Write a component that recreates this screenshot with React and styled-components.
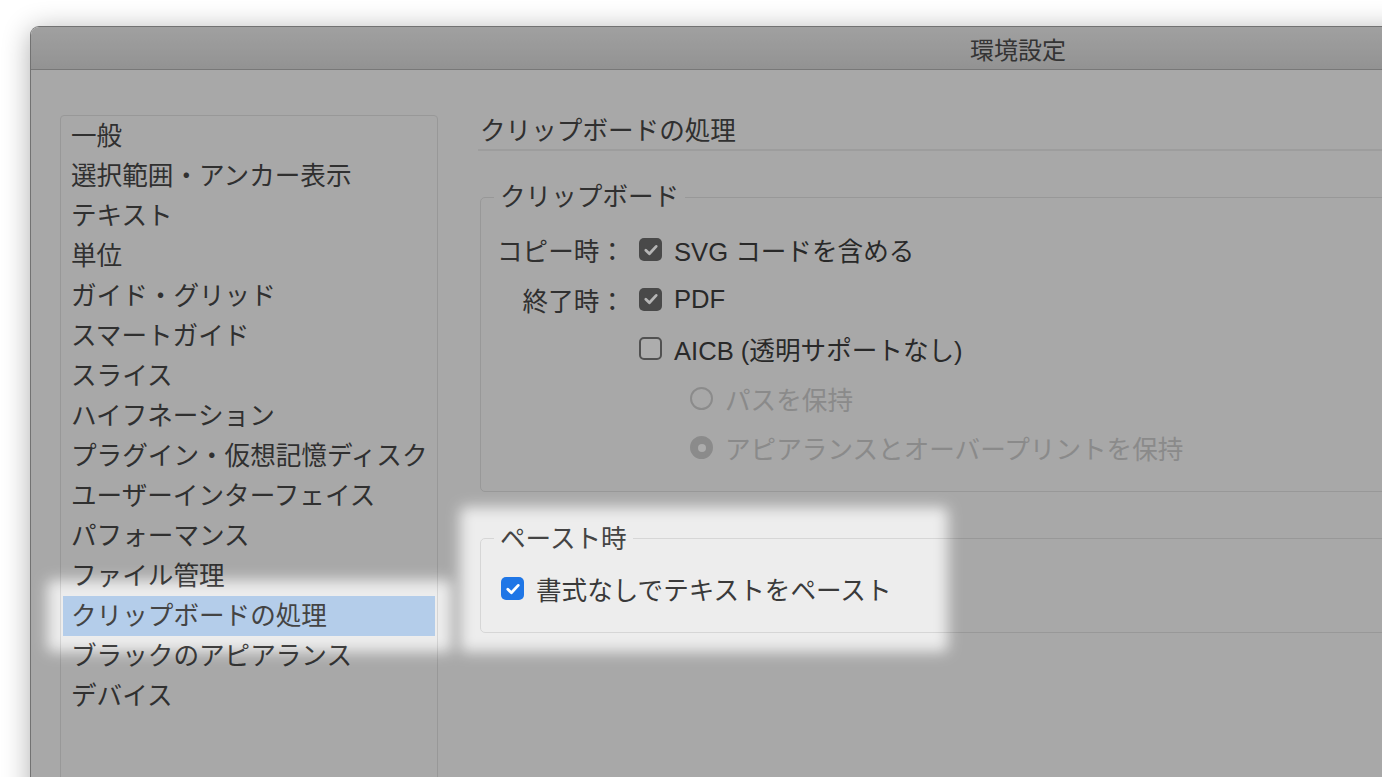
import React from 'react';
import styled, { createGlobalStyle } from 'styled-components';

const GlobalStyle = createGlobalStyle`
  html, body {
    margin: 0;
    padding: 0;
    background: #fff;
    overflow: hidden;
  }
  body {
    font-family: "Liberation Sans", "Noto Sans CJK JP", sans-serif;
    color: #3c3c3c;
  }
`;

const sections = [
    '一般',
    '選択範囲・アンカー表示',
    'テキスト',
    '単位',
    'ガイド・グリッド',
    'スマートガイド',
    'スライス',
    'ハイフネーション',
    'プラグイン・仮想記憶ディスク',
    'ユーザーインターフェイス',
    'パフォーマンス',
    'ファイル管理',
    'クリップボードの処理',
    'ブラックのアピアランス',
    'デバイス',
];

const Check = () => (
    <svg width="16" height="16" viewBox="0 0 16 16">
        <path d="M2.8 8.3 L6.4 11.8 L13.2 4.4" fill="none" stroke="#fff" strokeWidth="2.8" strokeLinecap="round" strokeLinejoin="round" />
    </svg>
);

const Spotlight = () => (
    <Overlay>
        <defs>
            <filter id="soft" x="-50%" y="-50%" width="200%" height="200%">
                <feGaussianBlur stdDeviation="7" />
            </filter>
            <mask id="holes">
                <rect width="100%" height="100%" fill="#fff" />
                <rect x="16" y="553" width="405" height="72" rx="6" fill="#000" filter="url(#soft)" />
                <rect x="429" y="480" width="488" height="145" rx="6" fill="#000" filter="url(#soft)" />
            </mask>
        </defs>
        <rect width="100%" height="100%" fill="#000" fillOpacity="0.29" mask="url(#holes)" />
    </Overlay>
);

const App = () => {
    return (
        <Page>
            <GlobalStyle />
            <Window>
                <TitleBar>環境設定</TitleBar>
                <Body>
                    <Sidebar>
                        {sections.map((s) => (
                            <SidebarItem key={s} $selected={s === 'クリップボードの処理'}>{s}</SidebarItem>
                        ))}
                    </Sidebar>
                    <Main>
                        <Heading>クリップボードの処理</Heading>
                        <Group>
                            <Legend>クリップボード</Legend>
                            <Row>
                                <RowLabel>コピー時：</RowLabel>
                                <Box $checked><Check /></Box>
                                <OptionText>SVG コードを含める</OptionText>
                            </Row>
                            <Row>
                                <RowLabel>終了時：</RowLabel>
                                <Box $checked><Check /></Box>
                                <OptionText>PDF</OptionText>
                            </Row>
                            <Row>
                                <RowLabel />
                                <Box />
                                <OptionText>AICB (透明サポートなし)</OptionText>
                            </Row>
                            <Row $indent={51}>
                                <RowLabel />
                                <Radio />
                                <OptionText $disabled>パスを保持</OptionText>
                            </Row>
                            <Row $indent={51}>
                                <RowLabel />
                                <Radio $checked />
                                <OptionText $disabled>アピアランスとオーバープリントを保持</OptionText>
                            </Row>
                        </Group>
                        <Group $gap={32}>
                            <Legend>ペースト時</Legend>
                            <PasteRow>
                                <Box $checked $blue><Check /></Box>
                                <OptionText>書式なしでテキストをペースト</OptionText>
                            </PasteRow>
                        </Group>
                    </Main>
                </Body>
                <Spotlight />
            </Window>
        </Page>
    );
};

export default App;

const Page = styled.div`
    width: 1382px;
    height: 777px;
    overflow: hidden;
    box-sizing: border-box;
    padding: 26px 0 0 30px;
    background: #fff;
`;

const Window = styled.div`
    position: relative;
    width: 1976px;
    height: 900px;
    box-sizing: border-box;
    border: 1px solid #727272;
    border-bottom: none;
    border-radius: 9px 9px 0 0;
    overflow: hidden;
    background: #ededed;
    box-shadow: 0 4px 28px rgba(0, 0, 0, 0.32);
`;

const TitleBar = styled.div`
    height: 42px;
    border-bottom: 1px solid #a9a9a9;
    background: linear-gradient(#e2e2e2, #cfcfcf);
    display: flex;
    align-items: center;
    justify-content: center;
    font-size: 24px;
    color: #4a4a4a;
`;

const Body = styled.div`
    display: flex;
    gap: 40px;
    padding: 45px 0 0 29px;
`;

const Sidebar = styled.div`
    width: 378px;
    height: 800px;
    flex-shrink: 0;
    box-sizing: border-box;
    border: 1px solid #d6d6d6;
    border-radius: 4px;
    padding: 0 2px;
`;

const SidebarItem = styled.div`
    height: 40px;
    line-height: 40px;
    padding-left: 8px;
    font-size: 25.6px;
    color: #444;
    white-space: nowrap;
    background: ${(p) => (p.$selected ? '#b4cdea' : 'transparent')};
`;

const Main = styled.div`
    flex: 1;
`;

const Heading = styled.div`
    font-size: 25.6px;
    line-height: 30px;
    padding: 1px 0 3px 2px;
    border-bottom: 2px solid #dedede;
    color: #444;
`;

const Group = styled.fieldset`
    margin: ${(p) => p.$gap || 31}px 0 0 2px;
    border: 1px solid #d6d6d6;
    border-radius: 5px;
    padding: 13px 0 18px 13px;
    min-width: 0;
`;

const Legend = styled.legend`
    padding: 0 6px;
    font-size: 25.6px;
    line-height: 30px;
    color: #444;
`;

const Row = styled.div`
    display: flex;
    align-items: center;
    height: 49.5px;
    padding-left: ${(p) => p.$indent || 0}px;
`;

const PasteRow = styled(Row)`
    height: 50px;
    padding-left: 7px;
    margin-top: -3px;
`;

const RowLabel = styled.span`
    width: 131px;
    margin-right: 14px;
    text-align: right;
    font-size: 25.6px;
    color: #444;
    flex-shrink: 0;
`;

const Box = styled.span`
    width: 23px;
    height: 23px;
    box-sizing: border-box;
    border-radius: 5px;
    display: flex;
    align-items: center;
    justify-content: center;
    flex-shrink: 0;
    background: ${(p) => (p.$checked ? (p.$blue ? '#1f76e6' : '#676767') : '#f4f4f4')};
    border: ${(p) => (p.$checked ? 'none' : '2px solid #727272')};
`;

const Radio = styled.span`
    width: 23px;
    height: 23px;
    box-sizing: border-box;
    border-radius: 50%;
    flex-shrink: 0;
    position: relative;
    border: 2px solid #c4c4c4;
    background: ${(p) => (p.$checked ? '#c4c4c4' : 'transparent')};
    &::after {
        content: '';
        display: ${(p) => (p.$checked ? 'block' : 'none')};
        position: absolute;
        left: 50%;
        top: 50%;
        width: 8px;
        height: 8px;
        margin: -4px 0 0 -4px;
        border-radius: 50%;
        background: #f2f2f2;
    }
`;

const OptionText = styled.span`
    margin-left: 12px;
    font-size: 25.6px;
    white-space: nowrap;
    color: ${(p) => (p.$disabled ? '#c3c3c3' : '#3a3a3a')};
`;

const Overlay = styled.svg`
    position: absolute;
    left: 0;
    top: 0;
    width: 100%;
    height: 100%;
    pointer-events: none;
`;
